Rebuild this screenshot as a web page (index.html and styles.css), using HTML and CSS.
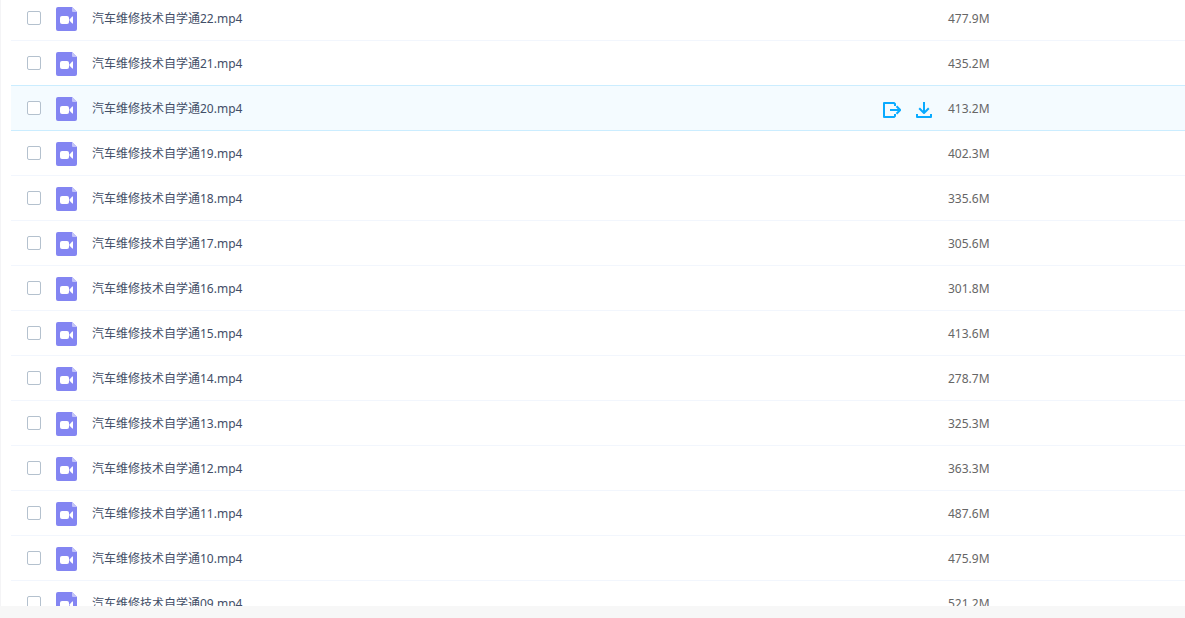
FILE: index.html
```html
<!DOCTYPE html>
<html lang="zh-CN">
<head>
    <meta charset="UTF-8">
    <meta name="viewport" content="width=device-width, initial-scale=1.0">
    <title>汽车维修技术自学通</title>
    <link rel="stylesheet" href="styles.css">
</head>
<body>

<!-- Icons -->
<svg class="icon-defs" aria-hidden="true">
    <symbol id="icon-video" viewBox="0 0 21 24">
        <path fill="#8385f2" d="M2 0h14l5 5v17a2 2 0 0 1-2 2H2a2 2 0 0 1-2-2V2a2 2 0 0 1 2-2z"/>
        <path fill="#c3c4f9" d="M16 0l5 5h-4a1 1 0 0 1-1-1z"/>
        <rect fill="#fff" x="4" y="9" width="9" height="8" rx="2"/>
        <path fill="#fff" d="M13.6 12.4L16.2 9.4H17v7.2H16.2L13.6 13.8z"/>
    </symbol>
    <symbol id="icon-save" viewBox="0 0 18 16">
        <path fill="none" stroke="#09aaff" stroke-width="2" stroke-linejoin="round" d="M12 4V2L11 1H1v14h10l1-1v-2M7 8h10M13.5 4.2L17.2 8l-3.7 3.8"/>
    </symbol>
    <symbol id="icon-download" viewBox="0 0 16 16">
        <path fill="none" stroke="#09aaff" stroke-width="2" stroke-linejoin="round" d="M8 0v11M3.2 6.2L8 11l4.8-4.8M1 12v3h14v-3"/>
    </symbol>
</svg>

<main class="file-panel">
    <table class="file-table">
        <tbody id="file-list"></tbody>
    </table>
</main>

<script>
    const files = [
        { no: "22", size: "477.9M" },
        { no: "21", size: "435.2M" },
        { no: "20", size: "413.2M", active: true },
        { no: "19", size: "402.3M" },
        { no: "18", size: "335.6M" },
        { no: "17", size: "305.6M" },
        { no: "16", size: "301.8M" },
        { no: "15", size: "413.6M" },
        { no: "14", size: "278.7M" },
        { no: "13", size: "325.3M" },
        { no: "12", size: "363.3M" },
        { no: "11", size: "487.6M" },
        { no: "10", size: "475.9M" },
        { no: "09", size: "521.2M" }
    ];

    const actions = `
        <div class="actions">
            <button type="button" class="action-btn" aria-label="保存到网盘"><svg width="18" height="16"><use href="#icon-save"/></svg></button>
            <button type="button" class="action-btn" aria-label="下载"><svg width="16" height="16"><use href="#icon-download"/></svg></button>
        </div>`;

    document.getElementById("file-list").innerHTML = files.map(file => {
        const name = `汽车维修技术自学通${file.no}.mp4`;
        return `
            <tr class="file-row${file.active ? " active" : ""}">
                <td>
                    <div class="name-cell">
                        <input type="checkbox" class="check" aria-label="${name}">
                        <svg class="file-icon" width="21" height="24"><use href="#icon-video"/></svg>
                        <a class="file-name" href="#">${name}</a>
                        ${file.active ? actions : ""}
                    </div>
                </td>
                <td class="size-cell">${file.size}</td>
            </tr>`;
    }).join("");
</script>

</body>
</html>
```
FILE: styles.css
```css
* { margin: 0; padding: 0; box-sizing: border-box; }
body { display: flex; flex-direction: column; height: 100vh; padding-bottom: 12px; background: #f7f7f7; color: #424e67; font-family: "Noto Sans", "Noto Sans CJK SC", sans-serif; font-size: 12px; line-height: 18px; }
.icon-defs { position: absolute; width: 0; height: 0; }

.file-panel { flex: 1; min-height: 0; overflow: hidden; padding-left: 10px; border-left: 1px solid #f4f4f6; background: #fff; }
/* the list is scrolled a little past its first row */
.file-table { width: 100%; margin-top: -4px; table-layout: fixed; border-collapse: separate; border-spacing: 0; }
.file-row td { height: 45px; border-bottom: 1px solid #f2f6fd; vertical-align: middle; }
.file-row.active td { background: #f4fbff; border-bottom-color: #cbedff; box-shadow: 0 -1px 0 #cbedff; }

.name-cell { display: flex; align-items: center; padding: 0 16px; }
.check { appearance: none; flex: none; width: 14px; height: 14px; margin-right: 15px; border: 1px solid #b4c1ce; border-radius: 2px; background: #fff; }
.check:checked { background: #09aaff; border-color: #09aaff; }
.file-icon { flex: none; margin: 1px 15px 0 0; }
.file-name { padding-top: 2px; color: #424e67; text-decoration: none; white-space: nowrap; }
.file-name:hover { color: #09aaff; }
.file-row td.size-cell { width: 237px; padding-top: 2px; color: #666; }

.actions { display: flex; gap: 15px; margin: 4px 0 0 auto; }
.action-btn { display: flex; border: none; background: none; cursor: pointer; }
```
